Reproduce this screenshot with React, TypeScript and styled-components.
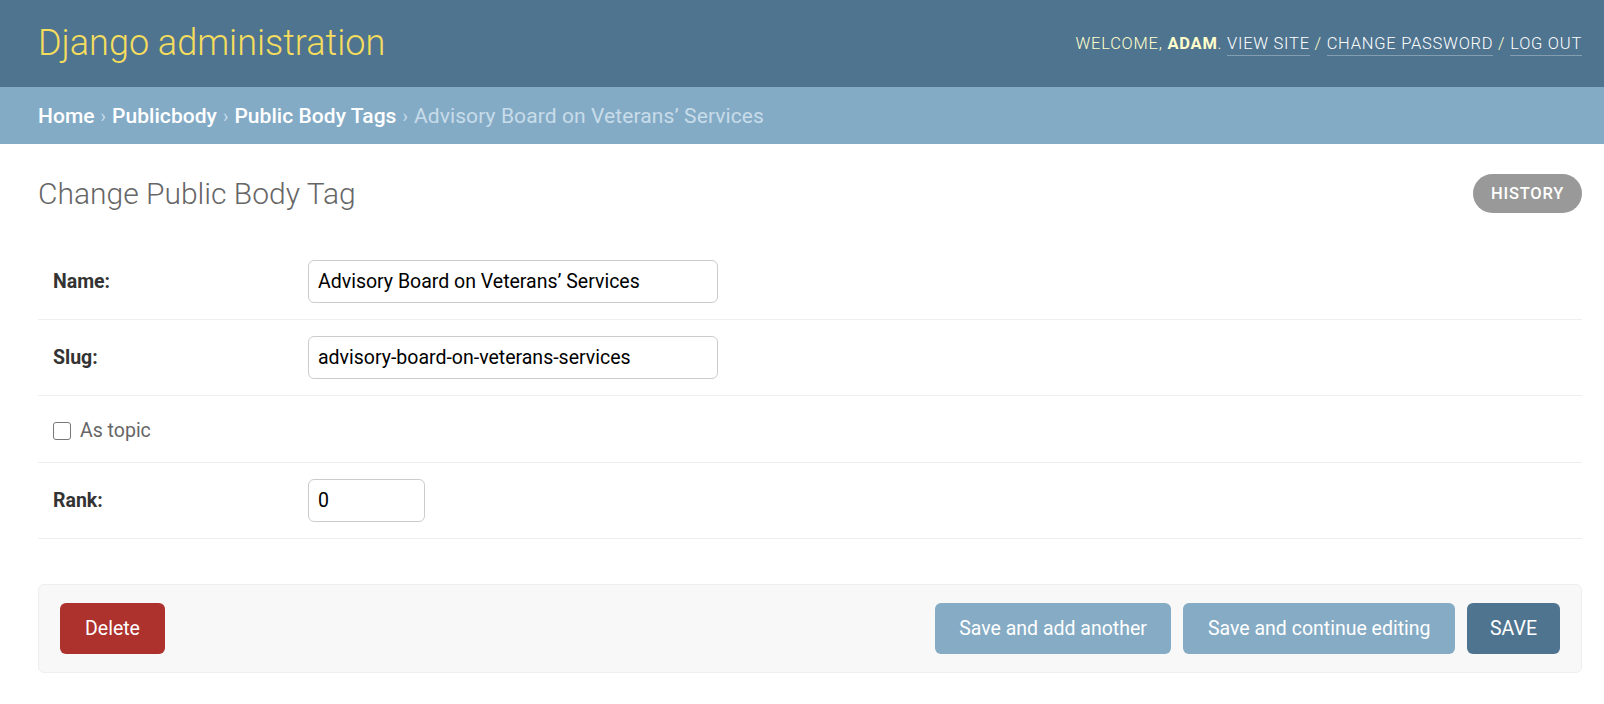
import React from "react";
import styled, { createGlobalStyle } from "styled-components";

const GlobalStyle = createGlobalStyle`
  html, body { margin: 0; padding: 0; background: #fff; }
  body {
    font-family: Roboto, "Lucida Grande", "DejaVu Sans", Verdana, Arial, sans-serif;
    font-size: 21px;
    color: #333;
  }
  * { box-sizing: border-box; }
`;

const Header = styled.header`
  height: 87px;
  display: flex;
  align-items: center;
  justify-content: space-between;
  padding: 0 22px 0 38px;
  background: #4f7490;
`;

const Branding = styled.h1`
  margin: 0;
  font-size: 36px;
  font-weight: 300;
  color: #f5dd5d;
  line-height: 1;
  margin-top: -2px;
`;

const UserTools = styled.div`
  font-size: 16.5px;
  font-weight: 300;
  letter-spacing: 0.75px;
  text-transform: uppercase;
  color: #ffc;
  margin-top: -1px;
  strong { font-weight: 700; }
`;

const ToolLink = styled.a`
  color: #fff;
  text-decoration: none;
  border-bottom: 1.5px solid rgba(255, 255, 255, 0.3);
  padding-bottom: 2px;
`;

const Breadcrumbs = styled.nav`
  height: 57px;
  display: flex;
  align-items: center;
  padding: 0 38px;
  background: #84abc6;
  color: #c8dce9;
  font-size: 21px;
  font-weight: 400;
  letter-spacing: 0.05px;
`;

const Crumb = styled.a`
  color: #fff;
  text-decoration: none;
  font-weight: 500;
`;

const Current = styled.span`
  letter-spacing: 0.1px;
`;

const Sep = styled.span`
  margin: 0 6px;
  color: #c8dce9;
  font-size: 18px;
`;

const Content = styled.main`
  padding: 30px 22px 0 38px;
`;

const TitleRow = styled.div`
  display: flex;
  align-items: center;
  justify-content: space-between;
  height: 39px;
`;

const Title = styled.h1`
  margin: 0;
  font-size: 30px;
  font-weight: 300;
  color: #666;
  line-height: 1;
`;

const HistoryButton = styled.a`
  display: flex;
  align-items: center;
  height: 39px;
  padding: 0 18px;
  border-radius: 22px;
  background: #999;
  color: #fff;
  font-size: 16.5px;
  font-weight: 500;
  letter-spacing: 0.75px;
  text-transform: uppercase;
  text-decoration: none;
`;

const Fieldset = styled.fieldset`
  margin: 31px 0 0;
  padding: 0;
  border: none;
`;

const Row = styled.div<{ $compact?: boolean }>`
  display: flex;
  align-items: center;
  padding: ${(p) => (p.$compact ? "16px 15px 15px" : "16px 15px")};
  border-bottom: 1px solid #eee;
`;

const Label = styled.label`
  width: 255px;
  flex: none;
  font-size: 19.5px;
  font-weight: 700;
  color: #333;
`;

const TextInput = styled.input<{ $w: number }>`
  width: ${(p) => p.$w}px;
  height: 43px;
  padding: 0 9px;
  border: 1px solid #ccc;
  border-radius: 6px;
  font-family: Roboto, "Lucida Grande", Arial, sans-serif;
  font-size: 19.5px;
  color: #000;
  background: #fff;
  outline: none;
`;

const CheckLine = styled.div`
  display: flex;
  align-items: center;
  height: 35px;
  padding-top: 2px;
`;

const CheckBox = styled.input`
  appearance: none;
  -webkit-appearance: none;
  margin: 0 9px 0 0;
  width: 18px;
  height: 18px;
  border: 1.5px solid #777;
  border-radius: 3px;
  background: #fff;
`;

const CheckLabel = styled.label`
  font-size: 19.5px;
  font-weight: 400;
  color: #666;
`;

const SubmitRow = styled.div`
  margin-top: 45px;
  display: flex;
  align-items: center;
  justify-content: space-between;
  padding: 18px 21px;
  background: #f8f8f8;
  border: 1px solid #eee;
  border-radius: 6px;
`;

const ButtonGroup = styled.div`
  display: flex;
  gap: 12px;
`;

const Button = styled.button<{ $variant: "delete" | "secondary" | "default" }>`
  height: 51px;
  padding: 0 ${(p) => (p.$variant === "delete" ? 25 : p.$variant === "default" ? 23 : 24.5)}px;
  border: none;
  border-radius: 6px;
  font-family: Roboto, "Lucida Grande", Arial, sans-serif;
  font-size: 19.5px;
  font-weight: 400;
  color: #fff;
  cursor: pointer;
  background: ${(p) =>
    p.$variant === "delete" ? "#ad312c" : p.$variant === "default" ? "#4f7490" : "#85abc5"};
  text-transform: ${(p) => (p.$variant === "default" ? "uppercase" : "none")};
`;

export default function App() {
  return (
    <>
      <GlobalStyle />
      <Header>
        <Branding>Django administration</Branding>
        <UserTools>
          Welcome, <strong>Adam</strong>. <ToolLink href="#">View site</ToolLink> /{" "}
          <ToolLink href="#">Change password</ToolLink> / <ToolLink href="#">Log out</ToolLink>
        </UserTools>
      </Header>
      <Breadcrumbs>
        <Crumb href="#">Home</Crumb>
        <Sep>›</Sep>
        <Crumb href="#">Publicbody</Crumb>
        <Sep>›</Sep>
        <Crumb href="#">Public Body Tags</Crumb>
        <Sep>›</Sep>
        <Current>Advisory Board on Veterans’ Services</Current>
      </Breadcrumbs>
      <Content>
        <TitleRow>
          <Title>Change Public Body Tag</Title>
          <HistoryButton href="#">History</HistoryButton>
        </TitleRow>
        <Fieldset>
          <Row>
            <Label htmlFor="name">Name:</Label>
            <TextInput id="name" $w={410} defaultValue="Advisory Board on Veterans’ Services" />
          </Row>
          <Row>
            <Label htmlFor="slug">Slug:</Label>
            <TextInput id="slug" $w={410} defaultValue="advisory-board-on-veterans-services" />
          </Row>
          <Row $compact>
            <CheckLine>
              <CheckBox type="checkbox" id="topic" />
              <CheckLabel htmlFor="topic">As topic</CheckLabel>
            </CheckLine>
          </Row>
          <Row>
            <Label htmlFor="rank">Rank:</Label>
            <TextInput id="rank" $w={117} defaultValue="0" />
          </Row>
        </Fieldset>
        <SubmitRow>
          <Button $variant="delete">Delete</Button>
          <ButtonGroup>
            <Button $variant="secondary">Save and add another</Button>
            <Button $variant="secondary">Save and continue editing</Button>
            <Button $variant="default">Save</Button>
          </ButtonGroup>
        </SubmitRow>
      </Content>
    </>
  );
}
